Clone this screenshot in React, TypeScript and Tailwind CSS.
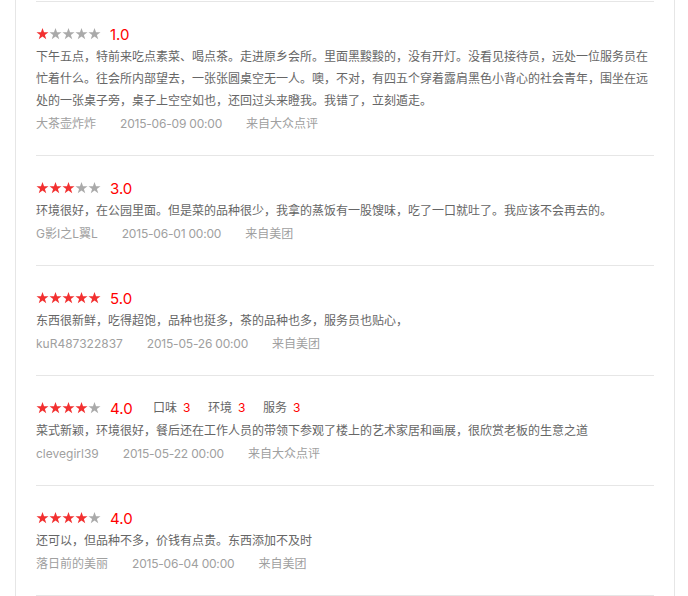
import React from "react";

type Review = {
  score: number;
  sub?: { label: string; value: number }[];
  text: string;
  user: string;
  date: string;
  source: string;
};

const reviews: Review[] = [
  {
    score: 1,
    text: "下午五点，特前来吃点素菜、喝点茶。走进原乡会所。里面黑黢黢的，没有开灯。没看见接待员，远处一位服务员在忙着什么。往会所内部望去，一张张圆桌空无一人。噢，不对，有四五个穿着露肩黑色小背心的社会青年，围坐在远处的一张桌子旁，桌子上空空如也，还回过头来瞪我。我错了，立刻遁走。",
    user: "大茶壶炸炸",
    date: "2015-06-09 00:00",
    source: "来自大众点评",
  },
  {
    score: 3,
    text: "环境很好，在公园里面。但是菜的品种很少，我拿的蒸饭有一股馊味，吃了一口就吐了。我应该不会再去的。",
    user: "G影I之L翼L",
    date: "2015-06-01 00:00",
    source: "来自美团",
  },
  {
    score: 5,
    text: "东西很新鲜，吃得超饱，品种也挺多，茶的品种也多，服务员也贴心，",
    user: "kuR487322837",
    date: "2015-05-26 00:00",
    source: "来自美团",
  },
  {
    score: 4,
    sub: [
      { label: "口味", value: 3 },
      { label: "环境", value: 3 },
      { label: "服务", value: 3 },
    ],
    text: "菜式新颖，环境很好，餐后还在工作人员的带领下参观了楼上的艺术家居和画展，很欣赏老板的生意之道",
    user: "clevegirl39",
    date: "2015-05-22 00:00",
    source: "来自大众点评",
  },
  {
    score: 4,
    text: "还可以，但品种不多，价钱有点贵。东西添加不及时",
    user: "落日前的美丽",
    date: "2015-06-04 00:00",
    source: "来自美团",
  },
];

function Star({ on }: { on: boolean }) {
  return (
    <svg width="13" height="12" viewBox="0 0 24 23" className={on ? "text-[#f23030]" : "text-[#aaaaaa]"}>
      <path
        fill="currentColor"
        d="M12 0l2.94 8.1H23.5l-6.9 5.1 2.6 8.3L12 16.5 4.8 21.5l2.6-8.3L0.5 8.1h8.56z"
      />
    </svg>
  );
}

function ReviewItem({ r }: { r: Review }) {
  return (
    <div className="border-t border-[#e6e6e6] pt-[21px] pb-[20px]">
      <div className="flex h-[22px] items-center">
        <div className="flex">
          {[1, 2, 3, 4, 5].map((i) => (
            <Star key={i} on={i <= r.score} />
          ))}
        </div>
        <span className="ml-[9px] w-[43px] text-[15px] leading-none text-[#ff0000]">
          {r.score.toFixed(1)}
        </span>
        {r.sub && (
          <div className="flex text-[12px] text-[#666]">
            {r.sub.map((s) => (
              <span key={s.label} className="w-[55px]">
                {s.label}
                <span className="ml-[6px] text-[#ff0000]">{s.value}</span>
              </span>
            ))}
          </div>
        )}
      </div>
      <p className="mt-[1px] text-[12px] leading-[22px] text-[#666]">{r.text}</p>
      <div className="mt-[1px] flex text-[12px] leading-[22px] text-[#a0a0a0]">
        <span className="mr-[24px]">{r.user}</span>
        <span className="mr-[24px] tracking-[-0.2px]">{r.date}</span>
        <span>{r.source}</span>
      </div>
    </div>
  );
}

export default function App() {
  return (
    <div className="h-[596px] w-[688px] overflow-hidden bg-white font-['Inter','Noto_Sans_CJK_SC',sans-serif]">
      <div className="ml-[15px] w-[660px] border-x border-[#e6e6e6] px-[20px] pt-[1px]">
        {reviews.map((r, i) => (
          <ReviewItem key={i} r={r} />
        ))}
        <div className="border-t border-[#e6e6e6] h-[20px]" />
      </div>
    </div>
  );
}
